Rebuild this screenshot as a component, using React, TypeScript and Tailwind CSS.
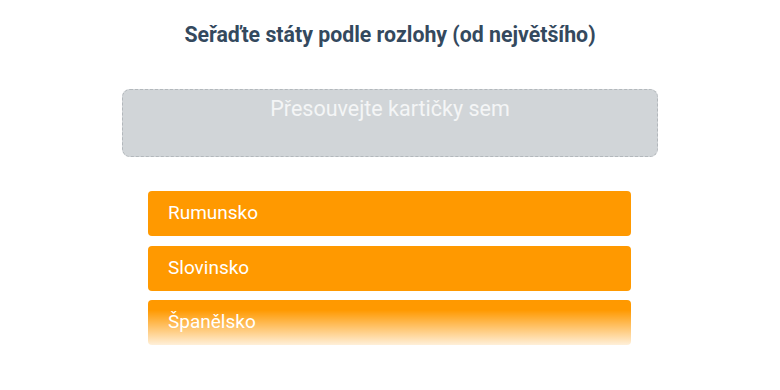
import React from "react";

export default function App() {
  const items = ["Rumunsko", "Slovinsko", "Španělsko"];
  return (
    <div
      className="relative w-[780px] h-[390px] bg-white overflow-hidden"
      style={{ fontFamily: "Roboto, 'Noto Sans', sans-serif" }}
    >
      <div className="flex flex-col items-center pt-[21px]">
        <h1 className="text-[21.3px] leading-[28px] font-bold text-[#34495e]">
          Seřaďte státy podle rozlohy (od největšího)
        </h1>
        <div className="mt-[40px] w-[536px] h-[68px] rounded-[8px] border border-dashed border-[#b3b8bc] bg-[#d1d5d8] flex justify-center pt-[5px]">
          <span className="text-[21.5px] leading-[28px] text-[#f4f5f6]">
            Přesouvejte kartičky sem
          </span>
        </div>
        <div className="mt-[34px] w-[483px] flex flex-col gap-[9.5px] ml-[-1px]">
          {items.map((t) => (
            <div
              key={t}
              className="h-[45px] rounded-[4px] bg-[#ff9900] flex items-center pl-[20px] text-[19px] text-white"
            >
              {t}
            </div>
          ))}
        </div>
      </div>
      <div className="absolute left-0 right-0 top-[310px] h-[37px] bg-gradient-to-b from-white/0 to-white/90 pointer-events-none" />
    </div>
  );
}
